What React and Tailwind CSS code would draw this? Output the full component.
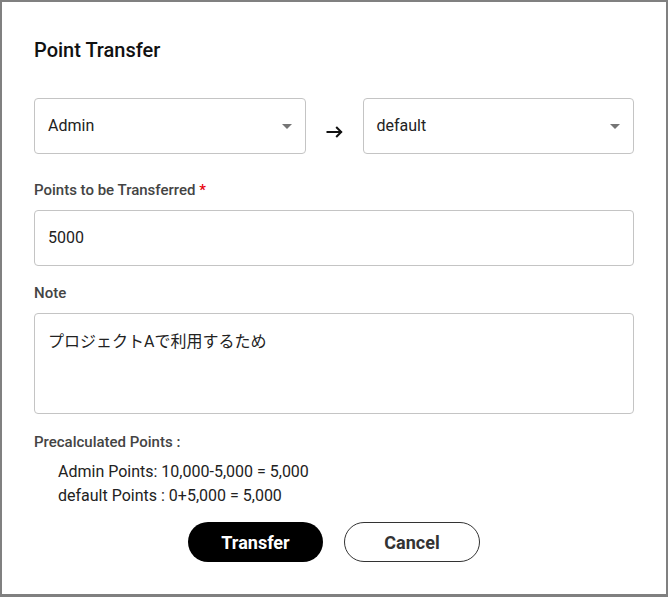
import React from "react";

const font = { fontFamily: "Roboto, 'Noto Sans CJK JP', sans-serif" };

function Caret() {
  return (
    <svg width="10" height="5" viewBox="0 0 10 5" className="shrink-0">
      <path d="M0 0 L5 5 L10 0 Z" fill="#757575" />
    </svg>
  );
}

function SelectBox({ value }) {
  return (
    <div className="flex-1 h-[56px] border border-[#c4c4c4] rounded-[4px] flex items-center pl-[13px] pr-[13px]">
      <span className="flex-1 text-[16px] text-[#222]">{value}</span>
      <Caret />
    </div>
  );
}

export default function App() {
  return (
    <div
      className="w-[668px] h-[597px] bg-[#808080] pt-[2px] pl-[2px] overflow-hidden"
      style={font}
    >
      <div className="w-[664px] h-[592px] bg-white px-8 flex flex-col">
        <h1 className="pt-[34px] text-[20px] leading-[28px] font-medium text-[#111]">
          Point Transfer
        </h1>

        <div className="mt-[34px] flex items-start">
          <SelectBox value="Admin" />
          <div className="w-[57px] h-[56px] flex items-center justify-center pt-[11px]">
            <svg width="17" height="12" viewBox="0 0 17 12" fill="none">
              <path d="M0.5 6 H15.5" stroke="#111" strokeWidth="2" />
              <path d="M10.2 1 L15.2 6 L10.2 11" stroke="#111" strokeWidth="2" />
            </svg>
          </div>
          <SelectBox value="default" />
        </div>

        <label className="mt-[26px] text-[15px] leading-[20px] font-medium text-[#444]">
          Points to be Transferred <span className="text-[#e8000b]">*</span>
        </label>
        <div className="mt-[10px] h-[56px] border border-[#c4c4c4] rounded-[4px] flex items-center pl-[13px]">
          <span className="text-[16px] text-[#222]">5000</span>
        </div>

        <label className="mt-[17px] text-[15px] leading-[20px] font-medium text-[#444]">
          Note
        </label>
        <div className="mt-[10px] h-[101px] border border-[#c4c4c4] rounded-[4px] pl-[13px] pt-[16px]">
          <span className="text-[16px] leading-[23px] text-[#222]">
            プロジェクトAで利用するため
          </span>
        </div>

        <div className="mt-[18px] text-[15px] leading-[20px] font-medium text-[#444]">
          Precalculated Points :
        </div>
        <div className="mt-[8px] pl-[24px] text-[16px] leading-[24px] text-[#222]">
          <div>Admin Points: 10,000-5,000 = 5,000</div>
          <div>default Points : 0+5,000 = 5,000</div>
        </div>

        <div className="mt-[14px] flex justify-center gap-[21px]">
          <button className="w-[135px] h-[40px] rounded-full bg-black text-white text-[18px] font-bold">
            Transfer
          </button>
          <button className="w-[136px] h-[40px] rounded-full bg-white border border-[#333] text-[#333] text-[18px] font-bold">
            Cancel
          </button>
        </div>
      </div>
    </div>
  );
}
